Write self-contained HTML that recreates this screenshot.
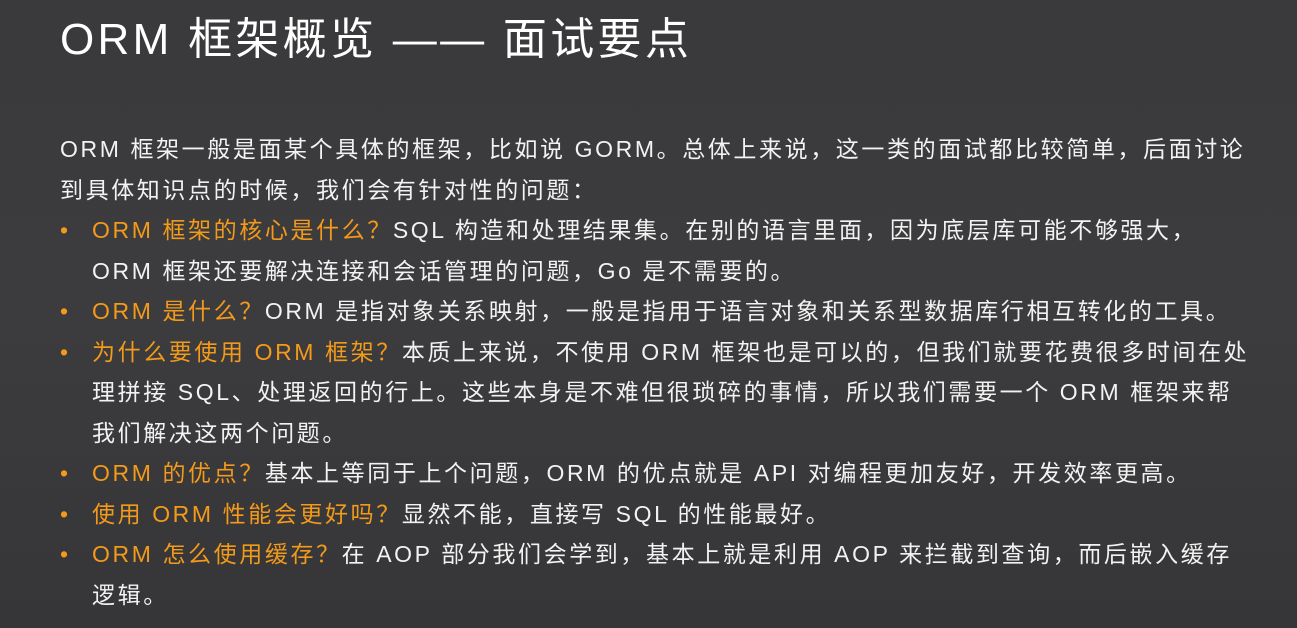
<!DOCTYPE html>
<html><head><meta charset="utf-8"><style>
html,body{margin:0;padding:0}
body{width:1297px;height:628px;overflow:hidden;background:linear-gradient(180deg,#3a3a3c 0%,#3c3c3e 50%,#363638 100%);color:#f2f2f2;font-family:"Liberation Sans","Noto Sans CJK SC",sans-serif;position:relative}
h1{position:absolute;left:60px;top:12px;margin:0;font-weight:normal;font-size:44px;line-height:56px;color:#fff;letter-spacing:3.3px;white-space:nowrap}
.body{position:absolute;left:60px;top:129px;width:1230px;font-size:23px;line-height:40.5px;letter-spacing:2.6px;white-space:nowrap}
p{margin:0}
ul{margin:0;padding:0;list-style:none}
li{position:relative;padding-left:32px}
li:before{content:"•";position:absolute;left:0;color:#f39a1a}
.o{color:#f39a1a}
</style></head><body>
<h1>ORM 框架概览 —— 面试要点</h1>
<div class="body">
<p>ORM 框架一般是面某个具体的框架，比如说 GORM。总体上来说，这一类的面试都比较简单，后面讨论<br>到具体知识点的时候，我们会有针对性的问题：</p>
<ul>
<li><span class="o">ORM 框架的核心是什么？</span>SQL 构造和处理结果集。在别的语言里面，因为底层库可能不够强大，<br>ORM 框架还要解决连接和会话管理的问题，Go 是不需要的。</li>
<li><span class="o">ORM 是什么？</span>ORM 是指对象关系映射，一般是指用于语言对象和关系型数据库行相互转化的工具。</li>
<li><span class="o">为什么要使用 ORM 框架？</span>本质上来说，不使用 ORM 框架也是可以的，但我们就要花费很多时间在处<br>理拼接 SQL、处理返回的行上。这些本身是不难但很琐碎的事情，所以我们需要一个 ORM 框架来帮<br>我们解决这两个问题。</li>
<li><span class="o">ORM 的优点？</span>基本上等同于上个问题，ORM 的优点就是 API 对编程更加友好，开发效率更高。</li>
<li><span class="o">使用 ORM 性能会更好吗？</span>显然不能，直接写 SQL 的性能最好。</li>
<li><span class="o">ORM 怎么使用缓存？</span>在 AOP 部分我们会学到，基本上就是利用 AOP 来拦截到查询，而后嵌入缓存<br>逻辑。</li>
</ul>
</div>
</body></html>
